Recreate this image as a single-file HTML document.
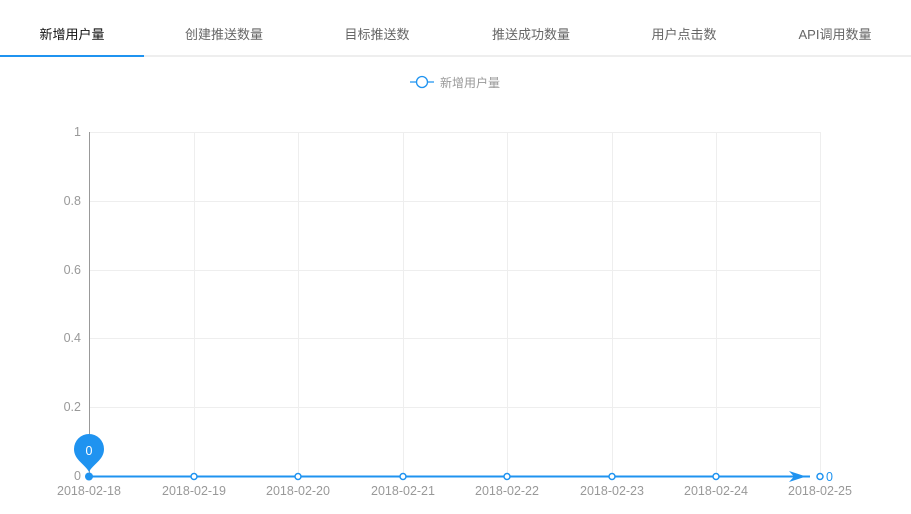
<!DOCTYPE html>
<html><head><meta charset="utf-8"><style>
body{margin:0;width:911px;height:514px;background:#fff;overflow:hidden;font-family:"Liberation Sans","Noto Sans CJK SC",sans-serif}
.tabs{position:absolute;top:0;left:0;width:911px;height:57px;border-bottom:2px solid #eee;box-sizing:border-box}
.tab{position:absolute;top:24px;font-size:13px;color:#666;transform:translateX(-50%);white-space:nowrap;font-weight:normal}
.act{position:absolute;left:0;top:55px;width:144px;height:2px;background:#1f93f0}
svg{position:absolute;left:0;top:0}
</style></head><body>
<div class="tabs">
<div class="tab" style="left:72px;color:#111">新增用户量</div>
<div class="tab" style="left:224px">创建推送数量</div>
<div class="tab" style="left:377px">目标推送数</div>
<div class="tab" style="left:531px">推送成功数量</div>
<div class="tab" style="left:684px">用户点击数</div>
<div class="tab" style="left:835px">API调用数量</div>
</div>
<div class="act"></div>
<svg width="911" height="514" font-family="Liberation Sans, Noto Sans CJK SC, sans-serif">
<g stroke="#1f93f0" fill="#fff" stroke-width="1.3"><line x1="410" y1="82" x2="434" y2="82"/><circle cx="422" cy="82" r="5.5"/></g>
<text x="440" y="87" font-size="12" fill="#999">新增用户量</text>
<g stroke="#eee" stroke-width="1">
<line x1="89" y1="132.5" x2="820" y2="132.5"/><line x1="89" y1="201.5" x2="820" y2="201.5"/><line x1="89" y1="270.5" x2="820" y2="270.5"/><line x1="89" y1="338.5" x2="820" y2="338.5"/><line x1="89" y1="407.5" x2="820" y2="407.5"/>
<line x1="194.5" y1="132" x2="194.5" y2="476"/><line x1="298.5" y1="132" x2="298.5" y2="476"/><line x1="403.5" y1="132" x2="403.5" y2="476"/><line x1="507.5" y1="132" x2="507.5" y2="476"/><line x1="612.5" y1="132" x2="612.5" y2="476"/><line x1="716.5" y1="132" x2="716.5" y2="476"/><line x1="820.5" y1="132" x2="820.5" y2="476"/>
</g>
<line x1="89.5" y1="132" x2="89.5" y2="476" stroke="#999"/>
<g font-size="12.5" fill="#999" text-anchor="end">
<text x="81" y="136">1</text><text x="81" y="205">0.8</text><text x="81" y="274">0.6</text><text x="81" y="342">0.4</text><text x="81" y="411">0.2</text><text x="81" y="480">0</text>
</g>
<g font-size="12.5" fill="#999" text-anchor="middle">
<text x="89" y="495">2018-02-18</text><text x="194" y="495">2018-02-19</text><text x="298" y="495">2018-02-20</text><text x="403" y="495">2018-02-21</text><text x="507" y="495">2018-02-22</text><text x="612" y="495">2018-02-23</text><text x="716" y="495">2018-02-24</text><text x="820" y="495">2018-02-25</text>
</g>
<line x1="89" y1="476.5" x2="810" y2="476.5" stroke="#1f93f0" stroke-width="2"/>
<path d="M806 476.5 L789 471 L794 476.5 L789 482 Z" fill="#1f93f0"/>
<g stroke="#1f93f0" stroke-width="1.5" fill="#fff">
<circle cx="194" cy="476.5" r="3"/><circle cx="298" cy="476.5" r="3"/><circle cx="403" cy="476.5" r="3"/><circle cx="507" cy="476.5" r="3"/><circle cx="612" cy="476.5" r="3"/><circle cx="716" cy="476.5" r="3"/><circle cx="820" cy="476.5" r="3"/>
</g>
<circle cx="89" cy="476.5" r="4" fill="#1f93f0"/>
<path d="M89 472 C85 464 74 460 74 449 A15 15 0 0 1 104 449 C104 460 93 464 89 472 Z" fill="#1f93f0"/>
<text x="89" y="455" font-size="12.5" fill="#fff" text-anchor="middle">0</text>
<text x="826" y="481" font-size="12.5" fill="#1f93f0">0</text>
</svg>
</body></html>
